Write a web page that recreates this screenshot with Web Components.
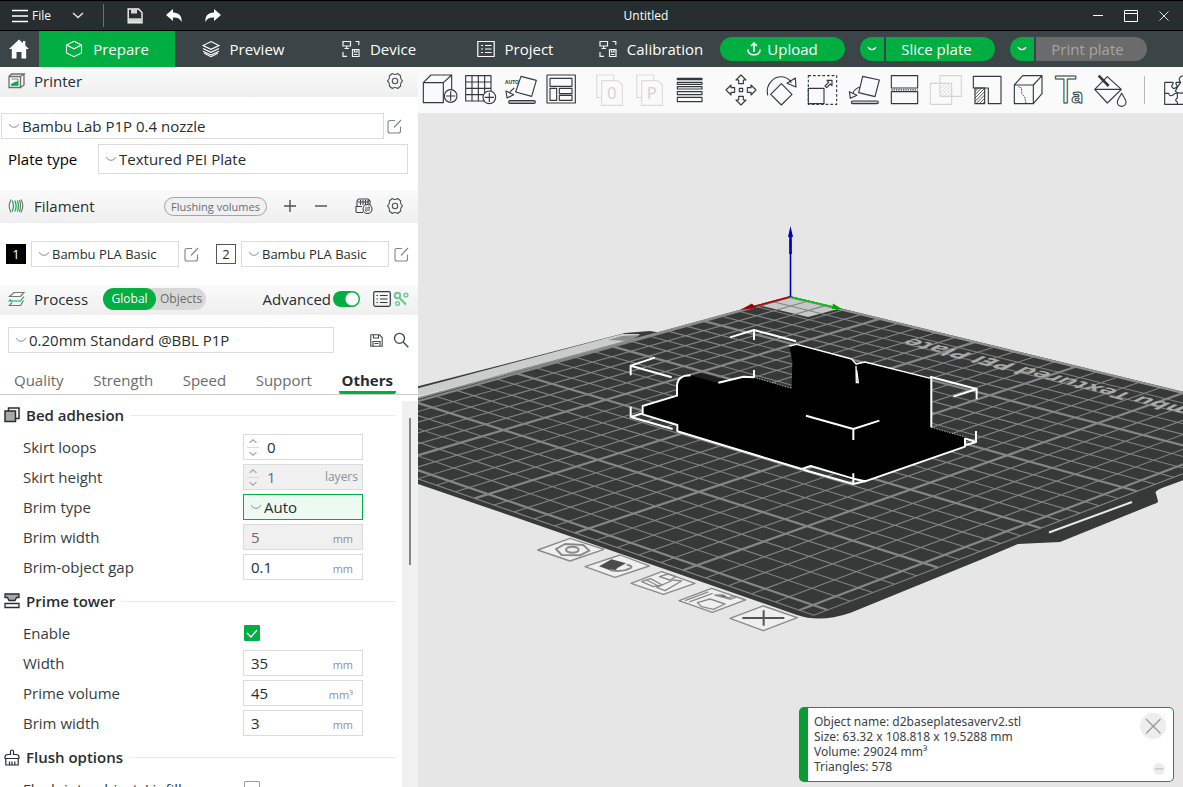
<!DOCTYPE html>
<html lang="en">
<head>
<meta charset="utf-8">
<meta name="viewport" content="width=device-width, initial-scale=1">
<title>Untitled</title>
<style>
  html, body { height: 100%; margin: 0; }
  body { font: 15px/20px "Open Sans", "Noto Sans", sans-serif; color: #262e30; background: #e6e6e6; overflow: hidden; }
</style>
</head>
<body>
<slicer-app>
  <title-bar slot="top" heading="Untitled"></title-bar>
  <main-nav slot="top"></main-nav>
  <side-panel slot="side">
    <section-bar icon="printer" heading="Printer"><icon-button name="gear" label="Printer settings"></icon-button></section-bar>
    <printer-setup></printer-setup>
    <section-bar class="tall" icon="filament" heading="Filament">
      <flush-button slot="beside">Flushing volumes</flush-button>
      <icon-button name="plus" label="Add filament"></icon-button>
      <icon-button name="minus" label="Remove filament"></icon-button>
      <icon-button class="apart" name="ams" label="Sync filament list"></icon-button>
      <icon-button name="gear" label="Filament settings"></icon-button>
    </section-bar>
    <filament-list></filament-list>
    <section-bar icon="process" heading="Process">
      <scope-switch slot="near"></scope-switch>
      <advanced-toggle></advanced-toggle>
      <icon-button class="snug" name="list" label="Parameter list"></icon-button>
      <icon-button class="snug" name="compare" label="Compare presets"></icon-button>
    </section-bar>
    <process-preset></process-preset>
    <setting-tabs></setting-tabs>
    <setting-list>
      <setting-group icon="adhesion" heading="Bed adhesion">
        <setting-row kind="spin" label="Skirt loops" value="0"></setting-row>
        <setting-row kind="spin" label="Skirt height" value="1" unit="layers" disabled></setting-row>
        <setting-row kind="select" label="Brim type" value="Auto"></setting-row>
        <setting-row label="Brim width" value="5" unit="mm" disabled></setting-row>
        <setting-row label="Brim-object gap" value="0.1" unit="mm"></setting-row>
      </setting-group>
      <setting-group icon="tower" heading="Prime tower">
        <setting-row kind="check" label="Enable" value="on"></setting-row>
        <setting-row label="Width" value="35" unit="mm"></setting-row>
        <setting-row label="Prime volume" value="45" unit="mm³"></setting-row>
        <setting-row label="Brim width" value="3" unit="mm"></setting-row>
      </setting-group>
      <setting-group icon="flush" heading="Flush options">
        <setting-row kind="check" label="Flush into objects' infill"></setting-row>
      </setting-group>
    </setting-list>
  </side-panel>
  <tool-bar slot="view"></tool-bar>
  <plate-view slot="view">
    <object-card>
      <span>Object name: d2baseplatesaverv2.stl</span>
      <span>Size: 63.32 x 108.818 x 19.5288 mm</span>
      <span>Volume: 29024 mm³</span>
      <span>Triangles: 578</span>
    </object-card>
  </plate-view>
</slicer-app>

<script>
/* name: [width, height, viewBox, drawing] */
const TOOL = cx => [36, 32, `${cx - 54} 24 108 96`];
const tool = (cx, art) => [...TOOL(cx), `<g fill="none" stroke="#323a3d" stroke-width="3.4" stroke-linejoin="round">${art}</g>`];
const faint = (cx, art) => [...TOOL(cx), `<g fill="none" stroke="#dcdcdc" stroke-width="3.4">${art}</g>`];
const line = (w, h, art, c = 'currentColor', s = 1.2) => [w, h, `0 0 ${w} ${h}`, `<g fill="none" stroke="${c}" stroke-width="${s}">${art}</g>`];
const ICONS = {
  menu: line(16, 14, '<path d="M0 1.5H16M0 7H16M0 12.5H16"/>', '#fff', 1.3),
  down: line(12, 7, '<path d="M1 1l5 4.5L11 1"/>', '#e8e8e8', 1.4),
  save: line(16, 16, '<path d="M1.200 1H11.500L15 4.500V14.800H1.200z"/><path d="M2 12.300H14.500" stroke-width="4" stroke="#d4d6d6"/><path d="M4 1V5.500H10V1z" fill="#d4d6d6" stroke="none"/>', '#f2f2f2', 1.4),
  undo: [16, 13, '0 0 16 13', '<path d="M0 6L7 0V3.500C13 3.500 16 7 15.600 13C14 9.500 11.500 8.300 7 8.500V12z" fill="#fff"/>'],
  redo: [16, 13, '0 0 16 13', '<path d="M16 6L9 0V3.500C3 3.500 0 7 .4 13C2 9.500 4.500 8.300 9 8.500V12z" fill="#fff"/>'],
  wmin: line(10, 12, '<path d="M0 5.500H10"/>', '#fff', 1),
  wmax: line(14, 12, '<path d="M.5.5H13.500V11.500H.5zM.5 3.500H13.500"/>', '#fff', 1),
  wclose: line(10, 10, '<path d="M.5.5l9 9M9.500.5l-9 9"/>', '#dcdcdc', 1),
  home: [20, 20, '0 0 20 20', '<path d="M10 .5L0 10h2.800V19.500H7.500V13h5v6.500h4.700V10H20L16.300 6.400V2H14V4.200z" fill="#fff"/>'],
  cube: line(18, 18, '<path d="M9 1.300L16.500 5V13L9 16.700L1.500 13V5zM1.500 5L9 8.800L16.500 5"/>', '#fff', 1.1),
  layers: line(18, 18, '<path d="M9 1.500L17 5.500L9 9.300L1 5.500zM1 8.500L9 12.300L17 8.500M1 11.200L9 15L17 11.200M2.200 13.200L9 16.700L15.800 13.200"/>', '#fff', 1.1),
  device: line(18, 18, '<path d="M1 1.500H8.500V6H1zM4.700 6V8.500M2.500 8.500H7M13.500 1.500H16.800V5M1 12V16.300H5"/><path d="M10.500 9.500H17V16.500H10.500zM12.500 9.500V12H15V9.500M12 14.500H15.500"/>', '#f4f4f4', 1.2),
  project: line(18, 18, '<path d="M.8 1.500H17.200V16.500H.8z"/><path d="M4 5.500H6M8 5.500H14.500M4 9H6M8 9H14.500M4 12.500H6M8 12.500H14.500"/>', '#fff', 1.2),
  upload: line(14, 14, '<path d="M7 10V1M4 4L7 1L10 4M1 7.500C1 11 3.500 12.800 7 12.800S13 11 13 7.500"/>', '#fff', 1.6),
  downsm: line(10, 6, '<path d="M1 1.200C3 4.500 7 4.500 9 1.200"/>', '#fff', 1.3),
  chev: line(12, 6, '<path d="M1 1C4 5.500 8 5.500 11 1"/>', '#a6abad', 1.1),
  printer: line(18, 16, '<path d="M1 3.500H12.500V14.500H1zM1 3.500L3.500 1H16L12.500 3.500M16 1V12L12.500 14.500" stroke-width="1.300"/><path d="M3 11L8 8.500H10.500V12.800H3z" fill="#00ae42" stroke="none"/><path d="M3.500 6H10M10 6V9" stroke-width=".8"/>', '#6b6f70'),
  gear: line(16, 18, '<path d="M5.300 1.500Q8 3.500 10.700 1.500L13.700 4Q13 7 15.500 9Q13 11 13.700 14L10.700 16.500Q8 14.500 5.300 16.500L2.300 14Q3 11 .5 9Q3 7 2.300 4z" stroke-linejoin="round"/><circle cx="8" cy="9" r="2.700"/>', '#4c5254', 1.1),
  plus: line(14, 14, '<path d="M7 1V13M1 7H13"/>', '#4a5052', 1.4),
  minus: line(14, 14, '<path d="M1 7H13"/>', '#4a5052', 1.4),
  ams: line(18, 16, '<path d="M3.500 1H13L15 3V8M3.500 1L2 3V8M1 14V8.500H7M1 14.500H8M5.500 2V7M8 2V7M10.500 2V7M13 2V6M3 4H14"/><circle cx="12.500" cy="11" r="4.500" fill="#f5f5f5"/><path d="M10 10H15L13.500 8.500M15 12H10L11.500 13.500" stroke-width=".9"/>', '#3f4547', 1.1),
  filament: line(16, 16, '<path d="M3 1.500Q-.5 8 3 14.500M13 1.500Q16.500 8 13 14.500M11.500 2Q13.500 8 11.500 14" stroke="#777"/><path d="M4 2.500Q7 8 4 13.500M6.800 2.500Q9.500 8 6.800 13.500M9.300 2.500Q11.500 8 9.300 13.500" stroke="#00ae42"/>'),
  process: line(17, 16, '<path d="M6 1.500H16L12.500 5.500H1.500zM15.500 9.500L12.500 14.500H1.500L4 11.500" stroke="#777"/><path d="M3 8.500L1.500 10H12.500L16 5.500" stroke="#00ae42"/>'),
  list: line(18, 16, '<rect x=".7" y=".7" width="16.600" height="14.600" rx="1.500"/><path d="M3.500 4.500H5M7 4.500H14.500M3.500 8H5M7 8H14.500M3.500 11.500H5M7 11.500H14.500"/>', '#33393b', 1.2),
  compare: line(16, 16, '<circle cx="4.500" cy="4.500" r="2.800" stroke-width="2"/><circle cx="13" cy="4" r="1.900"/><circle cx="4.500" cy="12.500" r="1.900"/><path d="M7 7.500L13 13.500" stroke-width="2.200"/>', '#6cc795', 1.4),
  edit: line(15, 15, '<path d="M8 1.500H3Q1 1.500 1 3.500V12Q1 14 3 14H11.500Q13.500 14 13.500 12V7.500M7 8.500L14 1"/>', '#7f8587', 1.1),
  disk: line(13, 13, '<path d="M.8.8H9.500L12.200 3.500V12.200H.8zM3.500 1V4H8.500V1M3 12V7.500H10V12M4.500 9.500H8.500"/>', '#43494b', 1.1),
  search: line(16, 16, '<circle cx="6.500" cy="6.300" r="5"/><path d="M10.200 10L15.300 15.300"/>', '#3c4244', 1.3),
  adhesion: line(16, 16, '<path d="M4.500 4V1H15V11.500H11.500"/><rect x="1" y="4" width="10.500" height="10.500" fill="#a8a8a8"/>', '#262e30', 1.5),
  tower: line(16, 16, '<path d="M1 1H15V4.500H12.500L11 7.500H5L3.500 4.500H1z" fill="#a8a8a8"/><path d="M1 10.500H15V14.500H1z"/>', '#262e30', 1.3),
  flush: line(16, 17, '<path d="M6.500 5.500V2.500Q6.500 1 8 1T9.500 2.500V5.500H12Q15 5.500 15 8V9.500H1V8Q1 5.500 4 5.500zM1.800 9.500V16H14.200V9.500M5.500 16V12.500M8 16V12.500M10.800 16V12.500"/>', '#262e30', 1.2),
  tick: line(12, 9, '<path d="M1 4L5 8L11 1"/>', '#fff', 1.3),
  spinup: line(8, 4, '<path d="M.5 4L4 .7L7.500 4"/>', '#a6abad', 1.2),
  spindown: line(8, 4, '<path d="M.5 0L4 3.300L7.500 0"/>', '#a6abad', 1.2),
  close: line(26, 26, '<circle cx="13" cy="13" r="13" fill="#ededed" stroke="none"/><path d="M6 6L20.500 20.500M20.500 6L6 20.500"/>', '#9a9a9a', 1.3),
  shrink: line(12, 12, '<circle cx="6" cy="6" r="6" fill="#ededed" stroke="none"/><path d="M2 6H10"/>', '#c9c9c9', 1.6),

  addcube: tool(75, '<path d="M25 50H85V110H25zM25 50L48 27H110L85 50M110 27V72"/><circle cx="107" cy="90" r="19" fill="#fafafa"/><path d="M107 76V104M93 90H121"/>'),
  addplate: tool(197, '<path d="M151 29H227V105H151zM170 29V105M189 29V105M208 29V105M151 48H227M151 67H227M151 86H227"/><circle cx="222" cy="94" r="19" fill="#fafafa"/><path d="M222 80V108M208 94H236"/>'),
  orient: tool(321, '<path d="M318 31L364 43L350 91L302 78zM298 66Q286 74 283 82M273 75L276 96L296 86z"/><rect x="281" y="104" width="80" height="8" rx="4" fill="#c8cacb"/><text x="270" y="55" font-size="15" font-weight="700" fill="#323a3d" stroke="none">AUTO</text>'),
  arrange: tool(442, '<path d="M394 27H479V111H394zM403 37H469V61H403zM403 67H423V103H403zM431 67H469V83H431zM431 88H469V103H431z"/>'),
  splito: faint(581, '<path d="M559 95H544V27H595V42"/><path d="M559 44H608L621 57V118H559z"/><text x="575" y="98" font-size="50" stroke="none" fill="#d2d2d2">0</text>'),
  splitp: faint(704, '<path d="M679 95H664V27H715V42"/><path d="M679 44H728L741 57V118H679z"/><text x="694" y="98" font-size="50" stroke="none" fill="#d2d2d2">P</text>'),
  height: tool(828, '<path d="M787 37H861V41H787zM787 49H861V55H787zM787 62H861V69H787zM787 77H861V86H787zM787 94H861V107H787z"/>'),
  move: tool(976, '<path d="M971 67H981V77H971z"/>' + [0, 90, 180, 270].map(a => `<path transform="rotate(${a} 976 72)" d="M976 27L991 42H983V53H969V42H961z"/>`).join('')),
  rotate: tool(1101, '<path d="M1099 53L1131 85L1099 117L1067 85zM1058 88C1050 52 1080 28 1106 33Q1122 37 1129 50M1141 36L1143 63L1116 52z"/>'),
  scale: tool(69, '<path d="M25 29H110V115H25z" stroke-dasharray="8 6"/><path d="M25 67H72V113H25z" fill="#fafafa"/><path d="M96 43V59L91 54L80 65L75 60L86 49L81 43z"/>'),
  flat: tool(192, '<path d="M188 31L238 42L225 92L176 80zM178 64Q162 70 159 82M148 77L151 97L171 88z"/><rect x="154" y="105" width="81" height="8" rx="4" fill="#c8cacb"/>'),
  cut: tool(315, '<path d="M274 29H353V66H274zM274 77H353V113H274z"/><path d="M274 71.500H353" stroke-dasharray="4 3"/>'),
  bool: faint(438, '<path d="M420 29H484V91H420zM391 52H455V115H391z" stroke="#d4d4d4"/><path d="M421 68L436 53M421 80L448 53M421 91L454 58M432 91L454 69M444 91L454 81" stroke="#d0d0d0" stroke-width="2.500"/>'),
  support: tool(561, '<path d="M520 31H603V113H565V66H520z"/><path d="M525 66H554V113H525z"/><path d="M525 76L535 66M525 86L545 66M525 96L554 67M525 106L554 77M528 113L554 87M538 113L554 97M548 113L554 107" stroke-width="2.500"/>'),
  seam: tool(684, '<path d="M643 57H700V113H643zM643 57L668 29H726L700 57M726 29V83L700 113"/><path d="M655 62L665 66V84L674 92L678 113" stroke-dasharray="4 3" stroke-width="3"/>'),
  text: tool(807, '<text font-family="Noto Sans" stroke-width="3" fill="#fafafa"><tspan x="765" y="112" font-size="114" font-weight="400">T</tspan><tspan x="814" y="112" font-size="60" font-weight="700">a</tspan></text>'),
  paint: tool(930, '<path d="M922 32L964 70L922 111L884 70zM884 70H964"/><path d="M896 29L926 60" stroke-width="8"/><path d="M965 82C955 98 951 104 952 109A13 12 0 0 0 978 109C979 104 975 98 965 82z" fill="#fafafa"/>'),
  puzzle: tool(1132, '<path d="M1092 49H1117V54Q1108 63 1120 68Q1134 64 1126 54V49H1140Q1130 36 1144 30Q1158 30 1154 42L1176 40V66M1092 49V115H1176V66M1092 82H1104Q1106 92 1116 88Q1122 80 1130 82V96Q1120 104 1130 108V115M1140 49Q1130 62 1124 76Q1134 84 1150 80H1176"/>'),
};

const BASE = `*,:host{box-sizing:border-box} button{font:inherit;color:inherit;background:none;border:0;padding:0;margin:0} svg{display:block;flex:none}`;

function svg(name) {
  const [w, h, box, art] = ICONS[name];
  return `<svg width="${w}" height="${h}" viewBox="${box}" aria-hidden="true">${art}</svg>`;
}

/* Registers an element whose shadow root holds the given styles and markup. */
function define(tag, css, markup) {
  customElements.define(tag, class extends HTMLElement {
    constructor() { super(); this.attachShadow({ mode: 'open' }); }
    connectedCallback() {
      const t = document.createElement('template');
      t.innerHTML = `<style>${BASE}${css}</style>${typeof markup === 'function' ? markup(this) : markup}`;
      this.shadowRoot.replaceChildren(t.content.cloneNode(true));
    }
  });
}
const attr = (el, n) => el.getAttribute(n) || '';

define('slicer-app', `
  :host{display:flex;flex-direction:column;height:100vh}
  .body{flex:1;display:flex;min-height:0}
  .view{flex:1;min-width:0;display:flex;flex-direction:column}`,
  `<slot name="top"></slot><div class="body"><slot name="side"></slot><main class="view"><slot name="view"></slot></main></div>`);

define('title-bar', `
  :host{display:flex;align-items:center;height:31px;flex:none;background:#262e30;border-top:1px solid #000;border-bottom:1px solid #000;color:#fff;font-size:12px;line-height:16px}
  .left{display:flex;align-items:center;width:229px;padding-left:12px}
  .file{display:flex;align-items:center;gap:4px;margin-right:21px}
  .sep{width:1px;height:23px;background:#6b7173;margin:0 23px 0 19px}
  .left button + button{margin-left:23px}
  .left .file + button{margin-left:0}
  h1{flex:1;margin:0;font:inherit;text-align:center}
  .right{display:flex;align-items:center;width:120px;padding-left:30px;gap:21px}`,
  el => `<div class="left"><button class="file">${svg('menu')}File</button><button aria-label="File menu">${svg('down')}</button><i class="sep"></i>
    <button aria-label="Save">${svg('save')}</button><button aria-label="Undo">${svg('undo')}</button><button aria-label="Redo">${svg('redo')}</button></div>
    <h1>${attr(el, 'heading')}</h1>
    <div class="right"><button aria-label="Minimize">${svg('wmin')}</button><button aria-label="Maximize">${svg('wmax')}</button><button aria-label="Close">${svg('wclose')}</button></div>`);

define('main-nav', `
  :host{display:flex;align-items:center;height:36px;flex:none;background:#3b4446;color:#fff}
  nav{display:flex;height:100%}
  a{display:flex;align-items:center;justify-content:center;gap:10px;width:136px;color:inherit;text-decoration:none}
  a.home{width:39px;padding-right:2px}
  a.on{background:#00ae42}
  .actions{display:flex;gap:15px;margin-left:auto;padding-right:36px}
  .actions button{height:24px;background:#00ae42;display:flex;align-items:center;justify-content:center;white-space:nowrap}
  .upload{width:125px;border-radius:12px;gap:6px}
  .split{display:flex;gap:2px}
  .split button:first-child{width:24px;border-radius:12px 0 0 12px}
  .split button:last-child{width:109px;padding-right:8px;border-radius:0 12px 12px 0}
  .split button:disabled{width:111px;background:#6b6b6b;color:#a5a5a5}`,
  `<nav><a class="home" href="#home" aria-label="Home">${svg('home')}</a>
    ${[['cube', 'Prepare'], ['layers', 'Preview'], ['device', 'Device'], ['project', 'Project'], ['device', 'Calibration']]
      .map(([i, t], n) => `<a href="#${t.toLowerCase()}"${n ? '' : ' class="on"'}>${svg(i)}<span>${t}</span></a>`).join('')}</nav>
   <div class="actions"><button class="upload">${svg('upload')}<span>Upload</span></button>
    <div class="split"><button aria-label="Slice options">${svg('downsm')}</button><button>Slice plate</button></div>
    <div class="split"><button aria-label="Print options">${svg('downsm')}</button><button disabled>Print plate</button></div></div>`);

define('side-panel', `
  :host{flex:0 0 418px;display:flex;flex-direction:column;background:#fff;min-height:0;overflow:hidden}`, `<slot></slot>`);

define('icon-button', `
  :host{display:block} button{width:31px;height:24px;display:flex;align-items:center;justify-content:center}
  :host(.apart){margin-left:12px} :host(.snug) button{width:20px} :host(.snug){margin-right:-1px}`,
  el => `<button aria-label="${attr(el, 'label')}">${svg(attr(el, 'name'))}</button>`);

define('section-bar', `
  :host{display:flex;align-items:center;height:30px;flex:none;padding:0 8px 2px;background:linear-gradient(#fafafa,#efefef)}
  :host(.tall){height:33px}
  .ico{width:26px}
  h2{margin:0;font:inherit}
  .rest{margin-left:auto;display:flex;align-items:center}`,
  el => `<span class="ico">${svg(attr(el, 'icon'))}</span><h2>${attr(el, 'heading')}</h2><slot name="near"></slot><div class="rest"><slot name="beside"></slot><slot></slot></div>`);

define('flush-button', `
  :host{display:block;margin-right:7px}
  button{height:19px;width:103px;border:1px solid #a2a5a6;border-radius:10px;font-size:11px;line-height:16px;color:#6b6b7c;background:#f0f0f0;white-space:nowrap}`,
  `<button><slot></slot></button>`);

define('scope-switch', `
  :host{display:flex;width:103px;height:22px;margin-left:15px;border-radius:11px;background:#d8d8d8;font-size:12px;line-height:16px}
  button{flex:1;color:#6b6b6b} button.on{flex:0 0 53px;border-radius:11px;background:#00ae42;color:#fff}`,
  `<button class="on" aria-pressed="true">Global</button><button aria-pressed="false">Objects</button>`);

define('advanced-toggle', `
  :host{display:block;margin-right:12px}
  label{display:flex;align-items:center;gap:2px}
  input{appearance:none;margin:0;width:27px;height:16px;border-radius:8px;background:radial-gradient(circle at 19px 8px,#fff 6px,#00ae42 7px)}`,
  `<label>Advanced<input type="checkbox" role="switch" checked></label>`);

define('combo-box', `
  :host{display:grid;align-items:center;height:26px;min-width:0}
  select,svg{grid-area:1/1} svg{margin-left:7px;pointer-events:none}
  select{appearance:none;font:inherit;color:#262e30;width:100%;height:100%;border:1px solid #dbdbdb;border-radius:0;background:#fff;padding:0 0 0 20px;margin:0}`,
  el => `<select aria-label="${attr(el, 'label')}"><option>${attr(el, 'value')}</option></select>${svg('chev')}`);

define('printer-setup', `
  :host{display:block;flex:none;padding:16px 10px 16px 1px}
  .row{display:flex;align-items:center}
  .row combo-box{flex:1}
  .first{padding-right:5px}
  .plate{margin-top:5px;padding-left:7px;color:#000}
  .plate span{width:90px} .plate combo-box{height:30px}`,
  `<div class="row first"><combo-box label="Printer" value="Bambu Lab P1P 0.4 nozzle"></combo-box><icon-button class="snug" name="edit" label="Edit printer"></icon-button></div>
   <div class="row plate"><span>Plate type</span><combo-box label="Plate type" value="Textured PEI Plate"></combo-box></div>`);

define('filament-list', `
  :host{display:grid;grid-template-columns:1fr 1fr;gap:14px;flex:none;padding:18px 6px;font-size:13px}
  .item{display:flex;align-items:center;gap:5px}
  .n{width:20px;height:20px;border:1px solid #555;background:#fff;color:#262e30;line-height:18px;text-align:center}
  .n.dark{background:#000;color:#fff;border-color:#000}
  combo-box{flex:1} .edit{width:18px}`,
  `${[1, 2].map(n => `<div class="item"><button class="n${n == 1 ? ' dark' : ''}">${n}</button><combo-box label="Filament ${n}" value="Bambu PLA Basic"></combo-box><button class="edit" aria-label="Edit filament ${n}">${svg('edit')}</button></div>`).join('')}`);

define('process-preset', `
  :host{display:flex;align-items:center;flex:none;padding:12px 9px 0 8px}
  combo-box{flex:1;margin-right:36px} button + button{margin-left:10px}`,
  `<combo-box label="Process preset" value="0.20mm Standard @BBL P1P"></combo-box><button aria-label="Save preset">${svg('disk')}</button><button aria-label="Search">${svg('search')}</button>`);

define('setting-tabs', `
  :host{display:flex;flex:none;justify-content:space-between;padding:12px 22px 0 11px;height:42px;border-bottom:1px solid #cecece;color:#6b6b6b}
  button{height:29px;padding:0 3px;display:flex;align-items:center}
  button.on{color:#262e30;font-weight:700;border-bottom:3px solid #00ae42;border-radius:2px;padding-top:3px}`,
  ['Quality', 'Strength', 'Speed', 'Support', 'Others'].map(t => `<button${t == 'Others' ? ' class="on"' : ''}>${t}</button>`).join(''));

define('setting-list', `
  :host{flex:1;display:flex;min-height:0;overflow:hidden}
  .items{flex:1;padding-top:3px}
  .track{width:16px;margin-top:6px;background:#f0f0f0;display:flex;justify-content:center;padding-top:17px}
  .thumb{width:2px;height:147px;background:#868686}`,
  `<div class="items"><slot></slot></div><div class="track"><div class="thumb"></div></div>`);

define('setting-group', `
  :host{display:block;margin-bottom:2px}
  h3{display:flex;align-items:center;height:34px;margin:0;padding:0 6px 0 4px;font-size:15px;font-weight:600}
  h3 svg{margin-right:6px}
  h3::after{content:"";flex:1;height:1px;margin-left:6px;background:#ebebeb}`,
  el => `<h3>${svg(attr(el, 'icon'))}${attr(el, 'heading')}</h3><slot></slot>`);

define('setting-row', `
  :host{display:flex;align-items:center;height:30px;padding-left:23px;color:#363d3f}
  label{width:220px;white-space:nowrap}
  .box,select{width:120px;height:26px;border:1px solid #dbdbdb;background:#fff;color:#262e30}
  .box{display:flex;align-items:center;padding:0 9px 0 7px}
  .spin{padding:0 4px 0 3px}
  .box input{flex:1;min-width:0;width:0;border:0;padding:0;margin:0;background:none;font:inherit;color:inherit}
  .unit{font-size:12px;line-height:16px;color:#8c9196}
  .mm{padding-top:4px;font-size:11px}
  :host([disabled]) .box{background:#f0f0f0;color:#6b6b6b}
  .steps{width:12px;margin-right:8px;display:flex;flex-direction:column;align-items:center;gap:4px}
  .steps i{width:12px;height:1px;background:#dbdbdb}
  .pick{display:grid;align-items:center} .pick>*{grid-area:1/1} .pick svg{margin-left:7px;pointer-events:none}
  select{appearance:none;font:inherit;border:1px solid #00ae42;border-radius:0;background:#edfaf2;padding:0 0 0 20px;margin:0}
  .check{display:grid;place-items:center;margin-left:1px} .check>*{grid-area:1/1} .check svg{pointer-events:none}
  .check input{appearance:none;width:16px;height:16px;margin:0;border:1px solid #9a9ea0;border-radius:1px;background:#fff}
  .check input:checked{background:#00ae42;border-color:#00ae42}`,
  el => {
    const k = attr(el, 'kind'), v = attr(el, 'value'), u = attr(el, 'unit'), dis = el.hasAttribute('disabled') ? 'disabled' : '';
    const label = `<label for="c">${attr(el, 'label')}</label>`;
    if (k == 'check') return `${label}<span class="check"><input id="c" type="checkbox" ${v ? 'checked' : ''}>${v ? svg('tick') : ''}</span>`;
    if (k == 'select') return `${label}<span class="pick"><select id="c"><option>${v}</option></select>${svg('chev')}</span>`;
    const steps = k == 'spin' ? `<span class="steps">${svg('spinup')}<i></i>${svg('spindown')}</span>` : '';
    return `${label}<span class="box ${k}">${steps}<input id="c" type="text" value="${v}" ${dis}>${u ? `<span class="unit ${u == 'layers' ? '' : 'mm'}">${u}</span>` : ''}</span>`;
  });

define('tool-bar', `
  :host{display:flex;align-items:center;height:46px;flex:none;background:#fafafa;padding-left:1px}
  svg{overflow:visible}
  button{width:41px;height:40px;flex:none;display:flex;align-items:center;justify-content:center}
  .g1{margin-left:5px} .g2{margin-left:9px}
  .sep{width:1px;height:28px;flex:none;background:#b8b8b8;margin:0 12px 0 14px}`,
  () => {
    const names = { addcube: 'Add', addplate: 'Add plate', orient: 'Auto orient', arrange: 'Arrange', splito: 'Split to objects', splitp: 'Split to parts', height: 'Variable layer height',
      move: 'Move', rotate: 'Rotate', scale: 'Scale', flat: 'Lay on face', cut: 'Cut', bool: 'Mesh boolean', support: 'Support painting', seam: 'Seam painting', text: 'Text shape', paint: 'Color painting', puzzle: 'Assembly view' };
    return Object.entries(names).map(([k, t]) => `${k == 'puzzle' ? '<i class="sep"></i>' : ''}<button aria-label="${t}"${k == 'splito' ? ' class="g1"' : k == 'move' ? ' class="g2"' : ''}>${svg(k)}</button>`).join('');
  });

/* Projective map from bed millimetres (x, y) to view coordinates, from four known points. */
function projection(pairs) {
  const m = [];
  for (const [[x, y], [u, v]] of pairs) {
    m.push([x, y, 1, 0, 0, 0, -u * x, -u * y, u], [0, 0, 0, x, y, 1, -v * x, -v * y, v]);
  }
  for (let i = 0; i < 8; i++) {
    let p = i;
    for (let r = i + 1; r < 8; r++) if (Math.abs(m[r][i]) > Math.abs(m[p][i])) p = r;
    [m[i], m[p]] = [m[p], m[i]];
    for (let r = 0; r < 8; r++) if (r !== i) {
      const f = m[r][i] / m[i][i];
      for (let c = i; c < 9; c++) m[r][c] -= f * m[i][c];
    }
  }
  const h = m.map((row, i) => row[8] / row[i]);
  return (x, y) => {
    const w = h[6] * x + h[7] * y + 1;
    return [(h[0] * x + h[1] * y + h[2]) / w, (h[3] * x + h[4] * y + h[5]) / w].map(n => n.toFixed(1)).join(' ');
  };
}
const bed = projection([[[0, 0], [790, 297]], [[0, 200], [1183, 393]], [[256, 150], [575, 533]], [[100, 250], [1122.7, 487.3]]]);

function gridPaths() {
  let thin = '', bold = '';
  for (let n = 0; n <= 250; n += 10) {
    const d = `M${bed(n, 0)}L${bed(n, 256)}M${bed(0, n)}L${bed(256, n)}`;
    if (n % 50) thin += d; else bold += d;
  }
  thin += `M${bed(256, 0)}L${bed(256, 256)}L${bed(0, 256)}`;
  return `<path d="${thin}" stroke="#828483" stroke-width="1.100"/><path d="${bold}" stroke="#858786" stroke-width="2.200"/>`;
}

define('plate-view', `
  :host{flex:1;display:block;position:relative;min-height:0;overflow:hidden;background:#e6e6e6}
  svg{width:100%;height:100%}
  ::slotted(object-card){position:absolute;right:9px;bottom:5px}`,
  () => `<svg viewBox="418 113 765 674" preserveAspectRatio="xMidYMid slice" fill="none" role="img" aria-label="3D view of the plate">
    <g transform="translate(500 480) scale(.33333)" stroke="#8a8a8a" stroke-width="4" stroke-linejoin="round" fill="#efefef">
      <path d="M113 210L210 175L312 208L210 243z"/><path d="M168 207L195 192L250 195L268 212L240 226L185 225z" fill="none" stroke-width="6"/><ellipse cx="217" cy="209" rx="19" ry="9" fill="none" stroke-width="6"/>
      <path d="M255 260L360 225L448 258L345 292z"/><path d="M297 259L335 238L378 250L352 264L345 273L330 271z" fill="#4c4c4c" stroke="none"/><path d="M330 270Q365 278 390 265Q402 258 380 254" stroke-width="6" fill="none"/>
      <path d="M393 310L485 275L585 310L490 343z"/><path d="M425 305L452 296L487 315L460 320zM478 290L505 282L528 290L510 300zM520 300L545 303L495 332L470 322zM440 300L475 318" fill="none"/>
      <path d="M537 362L635 325L737 360L637 397z"/><path d="M555 362L625 336M568 366L638 340M592 368L630 357L675 372L640 388L605 380zM690 358L712 350M680 356L700 348" fill="none"/><path d="M645 345L670 345L690 357L670 352z" fill="#4c4c4c"/>
      <path d="M690 415L790 378L892 413L790 452z"/><path d="M727 414H853M791 391V437" stroke="#555" stroke-width="6"/>
    </g>
    <path d="M400 397V391L625 333L650 331L662 333L600 352z" fill="#3a3c3b"/>
    <path d="M400 393L622 334L640 334L630 341L400 401z" fill="#c9cdcb"/>
    <path d="M608 340L622 336L640 335L630 341z" fill="#8b8e8c"/>
    <path d="M790 296L1200 396V474L1162 488Q1154 491 1156 494L1158 501Q1158 503 1154 504L1060 542L1018 544L980 560L850 613Q820 623 797 615L500 512L400 478V403z" fill="#373938"/>
    <path d="M790 297L838 309L808 317L762 306z" fill="#c6c8c7"/>
    ${gridPaths()}
    <path d="M400 403L790 297L1200 397" stroke="#8e9190" stroke-width="1.500"/>
    <text transform="matrix(-1.750 -.440 1.200 -.600 911 338)" text-anchor="end" font-size="14" font-weight="700" fill="#a9abaa">Bambu Textured PEI Plate</text>
    <path d="M1049 532.500L1132 502" stroke="#e6e8e7" stroke-width="2"/>
    <path d="M790 297L748 308" stroke="#b00000" stroke-width="1.600"/><path d="M740 310L752 303.500L756 308z" fill="#a00000"/>
    <path d="M790 297L836 307.500" stroke="#00c800" stroke-width="1.600"/><path d="M842 309L833 303.500L832 309z" fill="#00a800"/>
    <path d="M790.500 297V240" stroke="#0000b4" stroke-width="1.600"/><path d="M790.500 226L793 237H791.800V254H789.200V237H788z" fill="#0000b4"/>
    <g transform="translate(600 210) scale(.33333)" stroke-linejoin="round">
      <path d="M128 588L232 557V520Q234 500 272 495L355 518L430 500L462 502L575 535L577 455L568 408L590 403L755 447L767 460L770 520H775L768 465L795 456L992 505V652L1098 682V710L795 812H760L630 768L605 775L232 662V645L128 615z" fill="#000"/>
      <path d="M275 496L350 517L385 510L300 489z" fill="#1c1d1c"/>
      <g stroke="#fff" stroke-width="6">
        <path d="M272 496Q232 496 231 528V557L128 588V613L232 645V664L605 777L632 768L760 806L795 814L1095 710V684M994 652V505M355 518L430 500L462 502"/>
        <path d="M568 408L590 403L755 447L768 462L795 456L992 505M768 468L769 518H775L770 480" stroke-width="4"/>
        <path d="M462 502L575 535M994 652L1098 682" stroke-width="2" stroke-dasharray="4 4"/>
        <path d="M390 382L462 360L588 394M462 360V390M165 443L92 467L215 502M92 467V496M92 590V621L128 610M92 621L218 657M462 480V502M990 500L1130 537L1060 560M1130 537V568M1128 663V696L1098 705M1128 696L1098 686M618 617L760 657L838 632M760 657V690M760 790V822L800 812M760 822L610 779"/>
      </g>
    </g>
  </svg><slot></slot>`);

define('object-card', `
  :host{display:flex;width:375px;height:75px;border:1px solid #0a9b35;border-left-width:9px;border-radius:5px;background:#fff;color:#3c4244;font-family:"Noto Sans",sans-serif;font-size:12px;line-height:15px}
  .lines{flex:1;display:flex;flex-direction:column;padding:6px 0 0 6px}
  .ctl{width:26px;margin:5px 7px 6px 0;display:flex;flex-direction:column;justify-content:space-between;align-items:center}
  .ctl button + button{margin-left:12px}`,
  `<div class="lines"><slot></slot></div><div class="ctl"><button aria-label="Close">${svg('close')}</button><button aria-label="Collapse">${svg('shrink')}</button></div>`);
</script>
</body>
</html>
